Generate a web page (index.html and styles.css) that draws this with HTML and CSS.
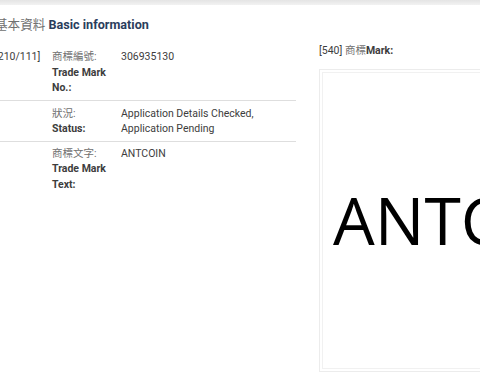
FILE: index.html
```html
<!DOCTYPE html>
<html lang="zh-Hant">
<head>
  <meta charset="UTF-8">
  <title>Trade Mark 306935130</title>
  <link rel="stylesheet" href="styles.css">
</head>
<body>
  <div class="topbar"></div>
  <div class="page">
    <h2 class="section-title"><span class="zh">基本資料</span> Basic information</h2>
    <div class="columns">
      <div class="details">
        <div class="row">
          <div class="code">[210/111]</div>
          <div class="label"><span class="zh">商標編號:</span><b>Trade Mark No.:</b></div>
          <div class="value">306935130</div>
        </div>
        <div class="row">
          <div class="code"></div>
          <div class="label"><span class="zh">狀況:</span><b>Status:</b></div>
          <div class="value">Application Details Checked, Application Pending</div>
        </div>
        <div class="row">
          <div class="code"></div>
          <div class="label"><span class="zh">商標文字:</span><b>Trade Mark Text:</b></div>
          <div class="value">ANTCOIN</div>
        </div>
      </div>
      <div class="mark">
        <div class="mark-title">[540] <span class="zh">商標</span><b>Mark:</b></div>
        <div class="mark-frame">
          <div class="mark-image">ANTCOIN</div>
        </div>
      </div>
    </div>
  </div>
</body>
</html>
```

FILE: styles.css
```css
:root {
  --heading: #2a3d5c;
  --text: #3d3d3d;
  --muted: #707070;
  --line: #dedede;
}

body {
  margin: 0;
  font-family: Roboto, 'Noto Sans CJK TC', sans-serif;
  font-size: 10.5px;
  line-height: 15.5px;
  color: var(--text);
  background: #fff;
  overflow: hidden;
}

.topbar {
  height: 5px;
  background: linear-gradient(#e4e4e4, #f2f2f2);
}

.page {
  margin-left: -5px;
  padding-top: 11px;
}

.section-title {
  margin: 0 0 15px;
  font-size: 12.6px;
  line-height: 18px;
  font-weight: 700;
  color: var(--heading);
}

.section-title .zh {
  font-weight: 400;
}

.columns {
  display: flex;
  gap: 23px;
}

.details {
  width: 301px;
  flex: none;
}

.row {
  display: flex;
  padding: 5px 0 4px;
  border-bottom: 1px solid var(--line);
}

.row:first-child {
  padding-top: 0;
}

.row:last-child {
  border-bottom: none;
  padding-top: 4px;
}

.code {
  width: 57px;
  flex: none;
  color: var(--text);
}

.label {
  width: 69px;
  flex: none;
  display: flex;
  flex-direction: column;
}

.zh {
  color: var(--muted);
}

.label b {
  font-weight: 700;
  color: var(--text);
  width: 58px;
}

.value {
  flex: 1;
  padding-right: 30px;
}

.mark {
  flex: 1;
  margin-top: -6px;
}

.mark-title {
  margin-bottom: 10px;
}

.mark-title b {
  font-weight: 700;
}

.mark-frame {
  height: 297px;
  border: 1px solid #ececec;
  padding: 2px;
}

.mark-image {
  height: 100%;
  box-sizing: border-box;
  border: 1px solid #f1f1f1;
  display: flex;
  align-items: center;
  padding-left: 10px;
  font-family: 'Open Sans', sans-serif;
  font-size: 66px;
  color: #000;
  white-space: nowrap;
  overflow: hidden;
}
```
